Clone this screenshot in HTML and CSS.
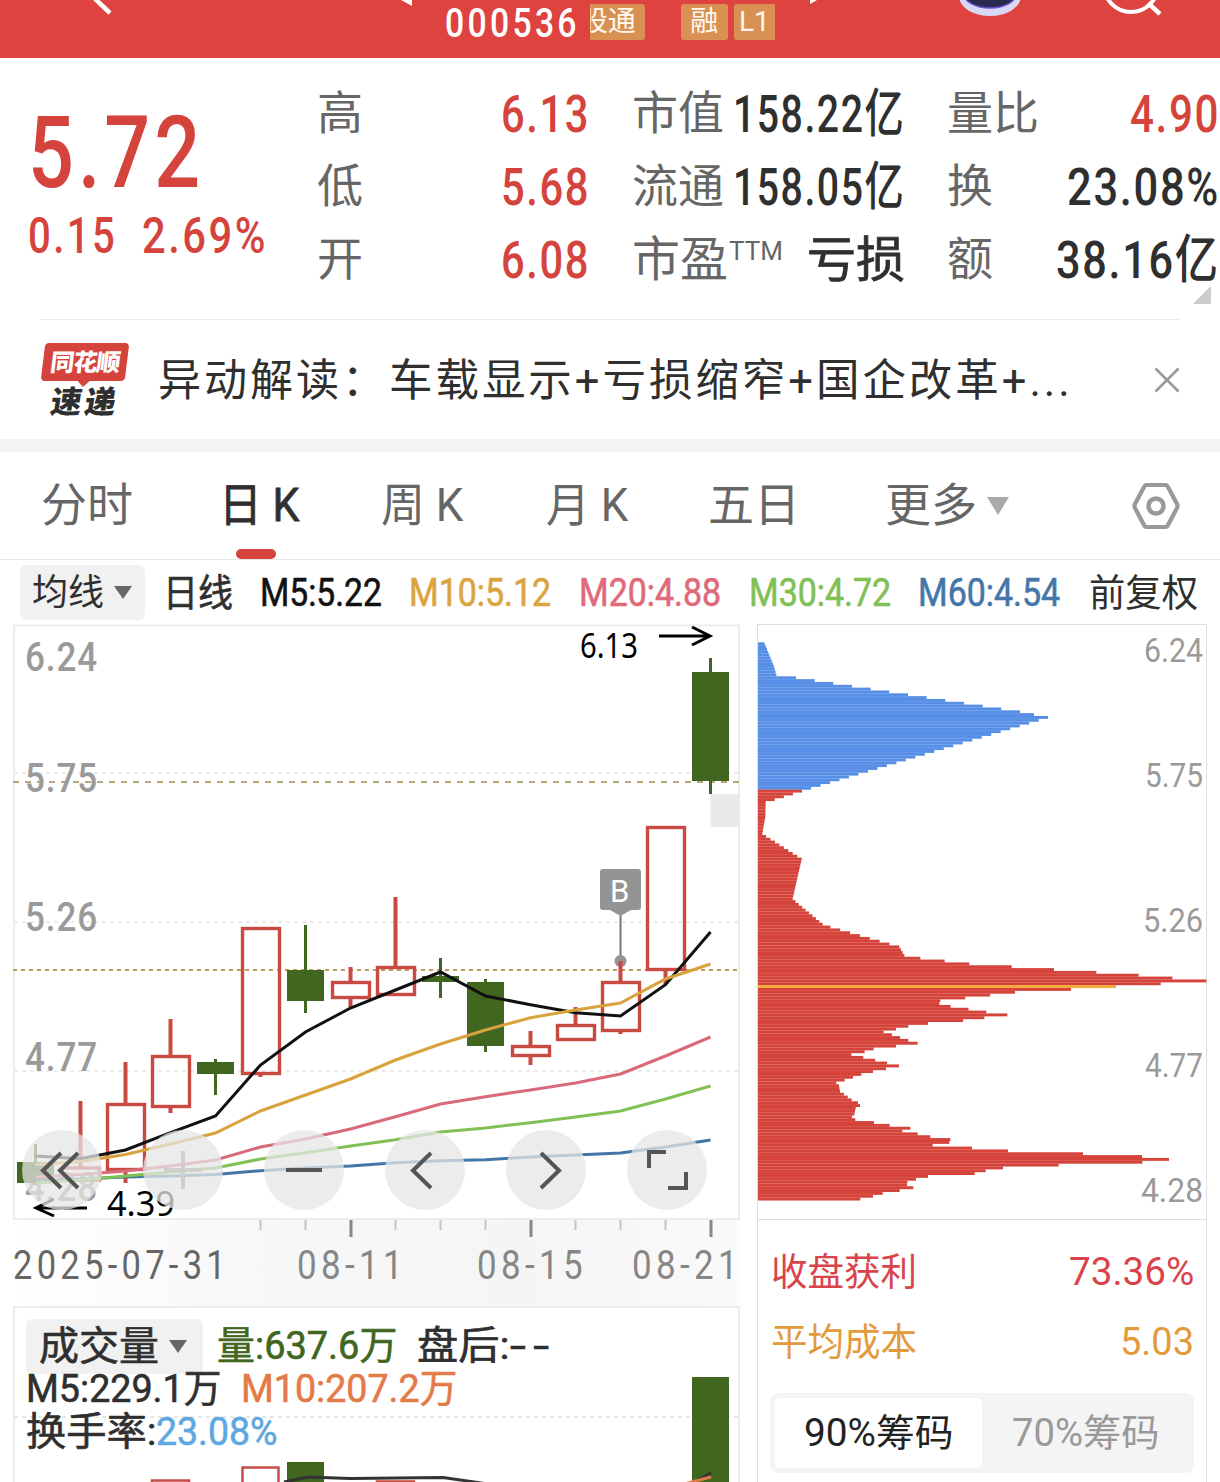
FILE: index.html
```html
<!DOCTYPE html>
<html lang="zh-CN">
<head>
  <meta charset="UTF-8">
  <title>000536</title>
  <link rel="stylesheet" href="styles.css">
</head>

<body>

<header class="topbar">
  <svg class="topbar-icons" width="1220" height="58" viewBox="0 0 1220 58">
    <path d="M90 -6 L110 13" stroke="#fff" stroke-width="4.5" fill="none"/>
    <path d="M401 0 L412 6 V0 Z M810 0 V4 L817 0 Z" fill="#fff"/>
    <ellipse cx="990" cy="-4" rx="31" ry="20" fill="#d9d7f3"/>
    <ellipse cx="990" cy="-6" rx="26" ry="14" fill="#2a2950" stroke="#6a4fd0" stroke-width="1.5"/>
    <circle cx="1131" cy="-15" r="27" stroke="#fff" stroke-width="4" fill="none"/>
    <path d="M1148 3 L1160 14" stroke="#fff" stroke-width="4.5"/>
  </svg>
  <span class="code fit" data-w="135">000536</span>
  <span class="tag tag-cut"><span>股通</span></span>
  <span class="tag"><span class="tag-text">融</span></span>
  <span class="tag tag-l1">L1</span>
</header>

<section class="quote">
  <div class="price">
    <div class="price-now"><span class="fit" data-w="176">5.72</span></div>
    <div class="price-diff"><span class="fit" data-w="89">0.15</span><span class="fit" data-w="126">2.69%</span></div>
  </div>
  <dl class="stats">
    <div><dt>高</dt><dd class="up"><span class="fit" data-w="89">6.13</span></dd></div>
    <div><dt>低</dt><dd class="up"><span class="fit" data-w="89">5.68</span></dd></div>
    <div><dt>开</dt><dd class="up"><span class="fit" data-w="89">6.08</span></dd></div>
  </dl>
  <dl class="stats">
    <div><dt>市值</dt><dd><span class="fit" data-w="172">158.22亿</span></dd></div>
    <div><dt>流通</dt><dd><span class="fit" data-w="172">158.05亿</span></dd></div>
    <div><dt class="pe">市盈<sup>TTM</sup></dt><dd class="loss"><span class="fit" data-w="98">亏损</span></dd></div>
  </dl>
  <dl class="stats">
    <div><dt>量比</dt><dd class="up"><span class="fit" data-w="90">4.90</span></dd></div>
    <div><dt>换</dt><dd><span class="fit" data-w="153">23.08%</span></dd></div>
    <div><dt>额</dt><dd><span class="fit" data-w="164">38.16亿</span></dd></div>
  </dl>
  <i class="corner"></i>
</section>

<section class="news">
  <div class="news-logo">
    <span class="logo-top">同花顺</span>
    <span class="logo-bottom">速递</span>
  </div>
  <p class="news-text"><span class="fit" data-w="230">异动解读：</span><span class="fit" data-w="684">车载显示+亏损缩窄+国企改革+...</span></p>
  <svg class="close" width="26" height="26" viewBox="0 0 26 26">
    <path d="M1.5 1.5 L24.5 24.5 M24.5 1.5 L1.5 24.5" stroke="#999" stroke-width="2.6"/>
  </svg>
</section>

<nav class="tabs">
  <span class="tab"><span class="fit" data-w="92">分时</span></span>
  <span class="tab active"><span class="fit" data-w="80">日 K</span></span>
  <span class="tab"><span class="fit" data-w="82">周 K</span></span>
  <span class="tab"><span class="fit" data-w="82">月 K</span></span>
  <span class="tab"><span class="fit" data-w="92">五日</span></span>
  <span class="tab"><span class="fit" data-w="92">更多</span><i class="caret"></i></span>
  <svg class="gear" width="50" height="48" viewBox="0 0 50 48">
    <path d="M16 3 H34 Q36 3 37 5 L46 22 Q47 24 46 26 L37 43 Q36 45 34 45 H16 Q14 45 13 43 L4 26 Q3 24 4 22 L13 5 Q14 3 16 3 Z" fill="none" stroke="#999" stroke-width="4.2"/>
    <circle cx="25" cy="24" r="7.5" fill="none" stroke="#999" stroke-width="4.5"/>
  </svg>
</nav>

<div class="ma-row">
  <span class="pill">均线<i class="caret caret-sm"></i></span>
  <span class="fit" data-w="70">日线</span>
  <span class="fit m5" data-w="122">M5:5.22</span>
  <span class="fit m10" data-w="142">M10:5.12</span>
  <span class="fit m20" data-w="142">M20:4.88</span>
  <span class="fit m30" data-w="142">M30:4.72</span>
  <span class="fit m60" data-w="142">M60:4.54</span>
  <span class="fit adj" data-w="109">前复权</span>
</div>

<main class="charts">
  <div class="left">
    <svg class="kline" width="727" height="596" viewBox="13 624 727 596">
      <rect x="14" y="625.5" width="725" height="593.5" fill="none" stroke="#ececec" stroke-width="2"/>
      <path d="M14 773 H738 M14 922 H738 M14 1071 H738" stroke="#ebebeb" stroke-width="2" stroke-dasharray="4 4"/>
      <path d="M13 782 H739" stroke="#b9a77a" stroke-width="2" stroke-dasharray="6 6"/>
      <path d="M13 970 H739" stroke="#c39a58" stroke-width="2" stroke-dasharray="4 4"/>
      <g class="axis-label">
        <text x="25" y="671" textLength="73">6.24</text>
        <text x="25" y="792" textLength="73">5.75</text>
        <text x="25" y="931" textLength="73">5.26</text>
        <text x="25" y="1071" textLength="73">4.77</text>
        <text x="25" y="1201" textLength="73">4.28</text>
      </g>
      <rect x="710.5" y="794" width="29.5" height="33" fill="#e9e9e9"/>
      <path d="M620.5 912 V958" stroke="#777" stroke-width="2"/>
      <circle cx="620.5" cy="961" r="6" fill="#949494"/>
      <path d="M603 869 H638 Q641 869 641 872 V907 Q641 910 638 910 H631 L620.5 916 L610 910 H603 Q600 910 600 907 V872 Q600 869 603 869 Z" fill="#949494"/>
      <text class="mark" x="610" y="902">B</text>
      <g id="candles"></g>
      <g id="averages"></g>
      <g class="extreme">
        <text x="580" y="658" textLength="58">6.13</text>
        <text x="107" y="1216" textLength="68">4.39</text>
        <path d="M659 636 H710 M692 627 L710 636 L692 645 M87 1208 H37 M54 1199 L36 1208 L54 1216"/>
      </g>
      <g class="buttons">
        <circle cx="62" cy="1170" r="40"/>
        <circle cx="183" cy="1170" r="40"/>
        <circle cx="304" cy="1170" r="40"/>
        <circle cx="425" cy="1170" r="40"/>
        <circle cx="546" cy="1170" r="40"/>
        <circle cx="667" cy="1170" r="40"/>
        <path d="M61 1153 L43 1170.500 L61 1188 M78 1153 L60 1170.500 L78 1188"/>
        <path class="off" d="M183 1151 V1189 M164 1170 H202"/>
        <path d="M286 1170 H322 M431 1153 L413 1170.500 L431 1188 M541 1153 L559 1170.500 L541 1188 M649 1168 V1152 H666 M686 1172 V1188 H668"/>
      </g>
    </svg>

    <svg class="dates" width="727" height="86" viewBox="13 1220 727 86">
      <path d="M260.500 1220 v10 M305.500 1220 v10 M395.500 1220 v10 M440.500 1220 v10 M485.500 1220 v10 M575.500 1220 v10 M620.500 1220 v10 M665.500 1220 v10" stroke="#c4c4c4" stroke-width="2"/>
      <path d="M351 1220 v17 M531 1220 v17 M711 1220 v17" stroke="#888" stroke-width="3"/>
      <g transform="translate(0 1279)">
        <text class="date-first" x="13" textLength="217">2025-07-31</text>
        <text x="297" textLength="110">08-11</text>
        <text x="477" textLength="110">08-15</text>
        <text x="632" textLength="110">08-21</text>
      </g>
    </svg>

    <div class="volume">
      <svg class="volume-chart" width="727" height="176" viewBox="13 1306 727 176">
        <path d="M14 1482 V1307 H739 V1482" fill="none" stroke="#ececec" stroke-width="2"/>
        <path d="M14 1417 H738" stroke="#e6e6e6" stroke-width="2" stroke-dasharray="4 4"/>
        <path d="M692 1377 H729 V1482 H692 Z M287 1462 H324 V1482 H287 Z" fill="#406620"/>
        <path d="M242.500 1490 V1467.500 H278.500 V1490 M152 1490 V1480.500 H189 V1490 M377 1490 V1481.500 H414 V1490" fill="none" stroke="#c84c44" stroke-width="2.500"/>
        <path d="M284 1482 L308 1477 L350 1478.500 L443 1477.500 L488 1484 M693 1483 L711 1473" fill="none" stroke="#333" stroke-width="3"/>
        <path d="M684 1484 L711 1477" stroke="#e37a48" stroke-width="3"/>
      </svg>
      <div class="legend">
        <div class="legend-line first">
          <span class="pill pill-vol"><span class="fit" data-w="120">成交量</span><i class="caret caret-sm"></i></span>
          <span class="fit green" data-w="180">量:637.6万</span>
          <span><span class="fit" data-w="92">盘后:</span><span class="fit dashes" data-w="47">--</span></span>
        </div>
        <div class="legend-line"><span class="fit" data-w="195">M5:229.1万</span><span class="fit orange" data-w="216">M10:207.2万</span></div>
        <div class="legend-line third"><span class="fit" data-w="130">换手率:</span><span class="fit blue" data-w="122">23.08%</span></div>
      </div>
    </div>
  </div>

  <aside class="chips">
    <svg width="450" height="594" viewBox="757 625 450 594">
      <g id="chips"></g>
      <g class="chip-label">
        <text x="1203" y="662" textLength="59">6.24</text>
        <text x="1203" y="787" textLength="58">5.75</text>
        <text x="1203" y="932" textLength="60">5.26</text>
        <text x="1203" y="1077" textLength="58">4.77</text>
        <text x="1203" y="1202" textLength="62">4.28</text>
      </g>
    </svg>
    <div class="chip-info">
      <div class="chip-line profit"><span class="fit" data-w="146">收盘获利</span><span class="fit" data-w="125">73.36%</span></div>
      <div class="chip-line cost"><span class="fit" data-w="146">平均成本</span><span class="fit" data-w="74">5.03</span></div>
      <div class="segment">
        <span class="seg on"><span class="fit" data-w="150">90%筹码</span></span>
        <span class="seg"><span class="fit" data-w="148">70%筹码</span></span>
      </div>
    </div>
  </aside>
</main>

<script src="script.js"></script>
</body>
</html>
```

FILE: styles.css
```css
* {
  box-sizing: border-box;
}
body {
  margin: 0;
  width: 1220px;
  height: 1482px;
  overflow: hidden;
  background: #fff;
  color: #2f2f2f;
  font-family: Roboto, "Noto Sans CJK SC", sans-serif;
}
.fit {
  display: inline-block;
  flex: none;
  white-space: pre;
  transform-origin: 0 50%;
}
i {
  font-style: normal;
}

/* top bar */
.topbar {
  position: relative;
  display: flex;
  height: 58px;
  padding: 4px 0 0 445px;
  overflow: hidden;
  background: #de433f;
  color: #fff;
}
.topbar-icons {
  position: absolute;
  left: 0;
  top: 0;
}
.code {
  font-size: 41px;
  line-height: 38px;
  font-weight: 500;
  letter-spacing: 4px;
}
.tag {
  flex: none;
  width: 47px;
  height: 36px;
  margin-right: 6px;
  border-radius: 3px;
  background: #d89152;
  color: #fff8ee;
  font-size: 28px;
  line-height: 36px;
  text-align: center;
}
.tag-cut {
  display: flex;
  justify-content: flex-end;
  width: 55px;
  margin: 0 36px 0 10px;
  padding-right: 9px;
  overflow: hidden;
  border-radius: 0 3px 3px 0;
}
.tag-cut span {
  flex: none;
}
.tag-l1 {
  width: 41px;
  border-radius: 3px 0 0 3px;
}

/* quote */
.quote {
  position: relative;
  display: flex;
  height: 262px;
  padding-top: 19px;
}
.quote::after {
  content: "";
  position: absolute;
  left: 40px;
  right: 40px;
  bottom: 0;
  height: 1px;
  background: #ebebeb;
}
.price {
  width: 317px;
  padding: 26px 0 0 28px;
  color: #d5443c;
  font-weight: 500;
}
.price-now {
  height: 100px;
  font-size: 101px;
  line-height: 100px;
  letter-spacing: 5px;
}
.price-diff {
  display: flex;
  gap: 25px;
  font-size: 50px;
  line-height: 67px;
  letter-spacing: 3px;
}
.stats {
  width: 273px;
  margin: 0 42px 0 0;
}
.stats:nth-of-type(3) {
  margin-right: 0;
}
.stats > div {
  display: flex;
  justify-content: space-between;
  height: 73px;
  line-height: 73px;
}
.stats dt {
  color: #666;
  font-size: 46px;
}
.stats dt.pe {
  font-size: 48px;
  white-space: nowrap;
}
.stats sup {
  position: relative;
  top: -16px;
  margin-left: 1px;
  font-size: 26px;
  line-height: 0;
  vertical-align: baseline;
}
.stats dd {
  margin: 0;
  padding-top: 1px;
  font-size: 52px;
  font-weight: 500;
  letter-spacing: 2px;
}
.stats dd.loss {
  font-size: 49px;
  font-weight: 400;
  letter-spacing: 0;
  -webkit-text-stroke: 0.8px;
}
.stats .up {
  color: #d5443c;
}
.corner {
  position: absolute;
  right: 9px;
  top: 228px;
  border-left: 18px solid transparent;
  border-bottom: 18px solid #ccc;
}

/* news strip */
.news {
  display: flex;
  align-items: center;
  height: 132px;
  padding: 0 40px;
  border-bottom: 13px solid #f4f4f4;
}
.news-logo {
  display: flex;
  flex-direction: column;
  align-items: center;
  width: 90px;
  height: 74px;
  margin-right: 28px;
}
.logo-top {
  position: relative;
  width: 84px;
  height: 38px;
  border-radius: 4px;
  background: #d5443c;
  color: #fff;
  font-size: 24px;
  font-weight: 900;
  line-height: 40px;
  text-align: center;
  letter-spacing: -1px;
  transform: skewX(-7deg);
}
.logo-top::after {
  content: "";
  position: absolute;
  left: 37px;
  top: 38px;
  border: 6px solid transparent;
  border-top-color: #d5443c;
}
.logo-bottom {
  font-size: 31px;
  font-weight: 900;
  line-height: 43px;
  letter-spacing: 3px;
  transform: skewX(-9deg);
}
.news-text {
  flex: 1;
  display: flex;
  gap: 1px;
  margin: 0;
  padding-top: 2px;
  font-size: 44px;
  line-height: 60px;
  letter-spacing: 3px;
}
.close {
  flex: none;
}

/* period tabs */
.tabs {
  display: grid;
  grid-template-columns: 178px 162px 165px 162px 177px 246px auto;
  align-items: center;
  height: 108px;
  padding-left: 41px;
  border-bottom: 1px solid #e6e6e6;
  color: #666;
  font-size: 46px;
  line-height: 109px;
}
.tab {
  position: relative;
  display: flex;
  align-items: center;
  height: 107px;
}
.tab.active {
  color: #2f2f2f;
  -webkit-text-stroke: 0.8px;
}
.tab.active::after {
  content: "";
  position: absolute;
  left: 17px;
  bottom: 0;
  width: 40px;
  height: 10px;
  border-radius: 5px;
  background: #d5443c;
}
.caret {
  margin-left: 10px;
  border: 11px solid transparent;
  border-top: 18px solid #aaa;
  border-bottom: 0;
}
.caret-sm {
  border-width: 13px 9px 0;
  border-top-color: #666;
}

/* moving averages */
.ma-row {
  display: flex;
  align-items: center;
  gap: 27.5px;
  height: 65px;
  padding-left: 20px;
  font-size: 38px;
  line-height: 62px;
}
.pill {
  display: flex;
  flex: none;
  align-items: center;
  width: 125px;
  height: 55px;
  margin-right: -10px;
  padding-left: 12px;
  border-radius: 6px;
  background: #f1f1f1;
  font-size: 36px;
}
.ma-row .fit:not(.adj) {
  -webkit-text-stroke: 0.6px;
}
.m5 { color: #111; }
.m10 { color: #dba43e; }
.m20 { color: #e0697a; }
.m30 { color: #80c055; }
.m60 { color: #4477a8; }
.adj {
  margin-left: 1px;
}

/* charts */
.charts {
  display: flex;
  height: 858px;
  margin-top: -1px;
  padding-left: 13px;
}
.left {
  width: 727px;
  margin-right: 17px;
}
.left svg,
.chips svg {
  display: block;
}
.axis-label {
  fill: #9a9a9a;
  font-size: 40px;
  font-weight: 500;
  letter-spacing: 1px;
}
.mark {
  fill: #fff;
  font-size: 31px;
}
.extreme {
  fill: #000;
  font-family: "Noto Sans", sans-serif;
  font-size: 34px;
}
.extreme path {
  fill: none;
  stroke: #000;
  stroke-width: 3;
}
.buttons circle {
  fill: #e6e6e6;
  fill-opacity: 0.75;
}
.buttons path {
  fill: none;
  stroke: #555;
  stroke-width: 4;
}
.buttons .off {
  stroke: #cfcfcf;
}
.dates {
  background: linear-gradient(90deg, #fff 0, #f8f8f8 30%, #f5f5f5 70%, #fafafa 100%);
  fill: #868686;
  font-size: 40px;
  letter-spacing: 5px;
}
.date-first {
  fill: #666;
}
.volume {
  position: relative;
  height: 176px;
  overflow: hidden;
}
.legend {
  position: absolute;
  left: 13px;
  top: 13px;
  font-size: 39px;
}
.legend-line {
  display: flex;
  align-items: center;
  gap: 20px;
  height: 43px;
  line-height: 43px;
  -webkit-text-stroke: 0.6px;
}
.legend-line.first {
  height: 49px;
  padding-top: 5px;
}
.legend-line.third {
  gap: 0;
}
.pill-vol {
  width: 177px;
  margin-right: -6px;
  padding-left: 13px;
  font-size: 40px;
}
.dashes {
  letter-spacing: 5px;
}
.green { color: #406620; }
.orange { color: #e37a48; }
.blue { color: #5ea8e2; }

/* chip distribution */
.chips {
  width: 450px;
  border: solid #dedede;
  border-width: 1px 1px 0;
}
.chips svg {
  margin: 0 -1px;
}
.chip-label {
  fill: #9a9a9a;
  font-size: 33px;
  text-anchor: end;
}
.chip-info {
  padding: 18px 12px 0 13px;
  border-top: 1px solid #dedede;
  font-size: 38px;
}
.chip-line {
  display: flex;
  justify-content: space-between;
  height: 70px;
  line-height: 68px;
}
.profit { color: #d9444a; }
.cost { color: #e39a3b; }
.segment {
  display: flex;
  width: 424px;
  height: 80px;
  margin: 15px 0 0 -1px;
  padding: 5px;
  border-radius: 8px;
  background: #f4f4f4;
}
.seg {
  flex: 1;
  border-radius: 5px;
  color: #999;
  line-height: 71px;
  text-align: center;
}
.seg.on {
  background: #fff;
  color: #222;
}
```

FILE: script.js
```js
const NS = 'http://www.w3.org/2000/svg';

function add(parent, tag, attrs) {
  const el = document.createElementNS(NS, tag);
  for (const key in attrs) el.setAttribute(key, attrs[key]);
  parent.appendChild(el);
}

// condense each label to its column width
document.querySelectorAll('.fit').forEach(el => {
  const natural = el.offsetWidth;
  const target = Number(el.dataset.w);
  el.style.transform = `scaleX(${target / natural})`;
  el.style.marginRight = `${target - natural}px`;
});
document.querySelectorAll('text[textLength]').forEach(el => {
  el.setAttribute('lengthAdjust', 'spacingAndGlyphs');
});

// high, body top, body bottom, low, rising
const candles = [
  [1144, 1162, 1183, 1185, 0],
  [1101, 1168, 1180, 1180, 1],
  [1062, 1104.5, 1169.5, 1183, 1],
  [1019, 1056.5, 1106.5, 1113, 1],
  [1059, 1062, 1074, 1095, 0],
  [928, 928.5, 1073.5, 1077, 1],
  [925, 970, 1001, 1013, 0],
  [967, 982.5, 997.5, 1008, 1],
  [897, 967.5, 994.5, 994.5, 1],
  [958, 976, 982, 998, 0],
  [979, 982, 1046, 1052, 0],
  [1031, 1046.5, 1055.5, 1065, 1],
  [1007, 1025.5, 1039.5, 1039.5, 1],
  [961, 982.5, 1030.5, 1034, 1],
  [827.5, 827.5, 969.5, 984, 1],
  [658, 672, 781, 794, 0]
];
const candleBox = document.getElementById('candles');
candles.forEach(([high, top, bottom, low, up], i) => {
  const x = 35.5 + i * 45;
  const color = up ? '#c84a42' : '#406620';
  add(candleBox, 'path', {
    d: `M${x} ${high} V${top} M${x} ${bottom} V${low}`,
    stroke: color, 'stroke-width': up ? 4 : 3
  });
  if (up) {
    add(candleBox, 'rect', {
      x: x - 18, y: top, width: 37, height: bottom - top,
      fill: 'none', stroke: color, 'stroke-width': 3.4
    });
  } else {
    add(candleBox, 'rect', { x: x - 18.5, y: top, width: 37, height: bottom - top, fill: color });
  }
});

const averages = {
  '#4477a8': [1181, 1179, 1177, 1176, 1174.5, 1170.7, 1168, 1166, 1162.7, 1160.7, 1159.7, 1157, 1155, 1153, 1147, 1140],
  '#80c055': [1183, 1180, 1176, 1172, 1168, 1159, 1152.7, 1146, 1139.7, 1132, 1128, 1122.7, 1117, 1111, 1099, 1086],
  '#d96a79': [1177, 1174.5, 1171, 1166, 1160, 1147, 1139, 1129, 1116.7, 1104, 1096.7, 1090, 1083, 1074, 1056, 1037],
  '#111': [1156, 1158.7, 1150, 1132.7, 1116, 1065, 1032, 1008, 990, 972, 996, 1004.7, 1012.7, 1016, 984.7, 932],
  '#d8a23c': [1164.5, 1161.5, 1154.5, 1144, 1133, 1111, 1095, 1079, 1060, 1044, 1030, 1017.7, 1010, 1003, 979, 964]
};
for (const color in averages) {
  add(document.getElementById('averages'), 'polyline', {
    points: averages[color].map((y, i) => `${35.5 + i * 45},${y}`).join(' '),
    fill: 'none', stroke: color, 'stroke-width': 3
  });
}

// chip distribution: [price level, amount], levels in between are interpolated
const chips = [
  [0, 20], [8, 48], [11, 55], [12, 114], [24, 786], [25, 828], [26, 870], [27, 842],
  [51, 159], [52, 132], [56, 23], [61, 22], [67, 13], [68, 24], [76, 131], [90, 104],
  [91, 112], [99, 194], [100, 217], [107, 424], [110, 439], [111, 487], [112, 560], [113, 634],
  [117, 1142], [118, 1243], [119, 1345], [120, 1208], [122, 939], [123, 771], [126, 547],
  [127, 544], [128, 578], [130, 685], [131, 748], [132, 679], [133, 615], [134, 510],
  [135, 451], [137, 377], [140, 451], [141, 479], [142, 414], [143, 347], [144, 320],
  [145, 280], [149, 423], [151, 345], [152, 310], [155, 235], [156, 243], [158, 246],
  [161, 281], [162, 300], [163, 306], [164, 293], [166, 289], [167, 282], [168, 292],
  [169, 348], [170, 395], [171, 457], [172, 433], [173, 479], [174, 517], [175, 577],
  [176, 574], [177, 524], [178, 642], [179, 750], [180, 975], [181, 1152], [182, 1233],
  [183, 1153], [184, 902], [185, 735], [186, 683], [187, 650], [188, 510], [189, 474],
  [190, 448], [191, 447], [192, 466], [193, 425], [194, 374], [195, 345], [196, 307]
];
const chipBox = document.getElementById('chips');
for (let k = 0; k < chips.length; k++) {
  const [from, a] = chips[k];
  const [to, b] = chips[k + 1] || [from + 1, a];
  for (let i = from; i < to; i++) {
    const amount = a + (b - a) * (i - from) / (to - from);
    add(chipBox, 'rect', {
      x: 758, y: 642.3 + i * 2.833, width: amount / 3, height: 2.95,
      fill: i < 52 ? '#588fe6' : '#d5443b'
    });
  }
}
// average cost line
add(chipBox, 'rect', { x: 758, y: 985, width: 358, height: 3, fill: '#f5ac3f' });
```
